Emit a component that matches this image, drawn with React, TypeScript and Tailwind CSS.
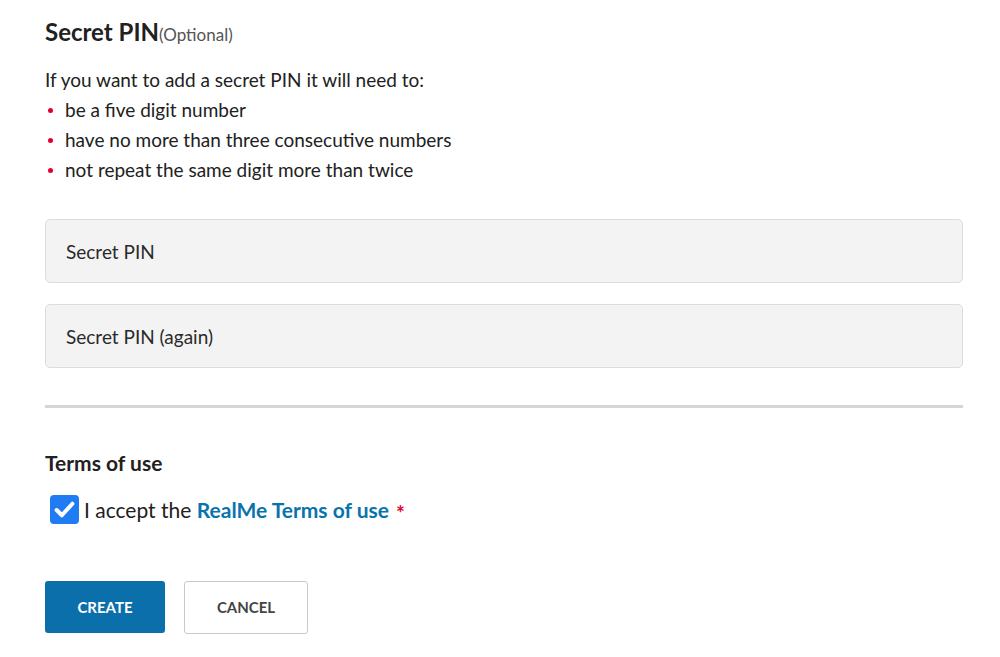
import React from 'react';

const font = { fontFamily: 'Lato, "Open Sans", sans-serif' };

export default function App() {
  return (
    <div className="min-h-[657px] bg-white px-[45px] pt-[16px] text-[#212121]" style={font}>
      <h2 className="flex items-baseline">
        <span className="text-[24px] font-bold leading-[32px]">Secret PIN</span>
        <span className="text-[17px] text-[#555]">(Optional)</span>
      </h2>
      <p className="mt-[17px] text-[19px] leading-[30px]">If you want to add a secret PIN it will need to:</p>
      <ul className="text-[19px] leading-[30px]">
        {['be a five digit number', 'have no more than three consecutive numbers', 'not repeat the same digit more than twice'].map((t) => (
          <li key={t} className="flex items-center">
            <span className="ml-[3px] mr-[12px] h-[5px] w-[5px] rounded-full bg-[#e4002b]" />
            {t}
          </li>
        ))}
      </ul>
      <div className="mt-[34px] flex w-[918px] flex-col gap-[21px]">
        <input
          placeholder="Secret PIN"
          className="h-[64px] rounded-[5px] border border-[#dcdcdc] bg-[#f3f3f3] px-[20px] text-[19px] placeholder:text-[#2a2a2a] outline-none"
          style={font}
        />
        <input
          placeholder="Secret PIN (again)"
          className="h-[64px] rounded-[5px] border border-[#dcdcdc] bg-[#f3f3f3] px-[20px] text-[19px] placeholder:text-[#2a2a2a] outline-none"
          style={font}
        />
      </div>
      <hr className="mt-[37px] w-[918px] border-t-[3px] border-[#d6d6d6]" />
      <h3 className="mt-[41px] text-[21px] font-bold leading-[28px]">Terms of use</h3>
      <label className="mt-[18px] flex items-center text-[21px] leading-[28px]">
        <span className="ml-[5px] mr-[5px] flex h-[29px] w-[29px] items-center justify-center rounded-[4px] bg-[#1f7cf2]">
          <svg width="21" height="17" viewBox="0 0 20 16" fill="none">
            <path d="M2.5 8.5l5 5L17.5 2.5" stroke="white" strokeWidth="3.8" strokeLinecap="round" strokeLinejoin="round" />
          </svg>
        </span>
        I accept the&nbsp;
        <a className="font-bold text-[#0a73ad]">RealMe Terms of use</a>
        <span className="relative top-[3px] ml-[7px] text-[21px] font-bold leading-none text-[#e4002b]">*</span>
      </label>
      <div className="mt-[57px] flex gap-[19px]">
        <button className="h-[52px] w-[120px] rounded-[3px] bg-[#0a6fab] text-[15px] font-bold text-white">CREATE</button>
        <button className="h-[53px] w-[124px] rounded-[3px] border border-[#c9c9c9] bg-white text-[15px] font-bold text-[#444]">CANCEL</button>
      </div>
    </div>
  );
}
